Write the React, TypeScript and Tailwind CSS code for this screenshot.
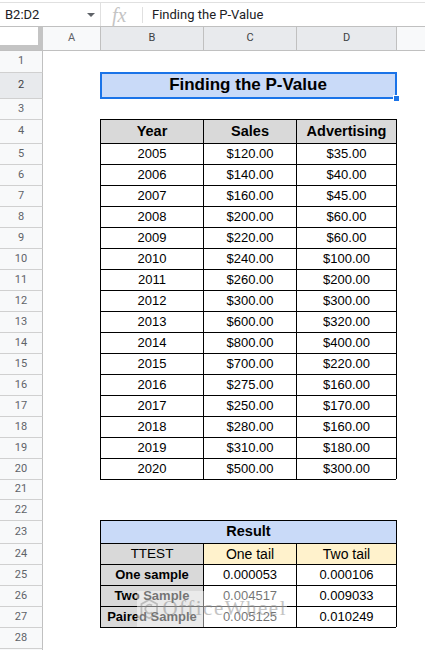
import React from 'react';

const years = [2005, 2006, 2007, 2008, 2009, 2010, 2011, 2012, 2013, 2014, 2015, 2016, 2017, 2018, 2019, 2020];
const sales = [120, 140, 160, 200, 220, 240, 260, 300, 600, 800, 700, 275, 250, 280, 310, 500];
const advertising = [35, 40, 45, 60, 60, 100, 200, 300, 320, 400, 220, 160, 170, 160, 180, 300];

const results = [
  { name: 'One sample', one: '0.000053', two: '0.000106' },
  { name: 'Two Sample', one: '0.004517', two: '0.009033' },
  { name: 'Paired Sample', one: '0.005125', two: '0.010249' },
];

const money = (v: number) => `$${v.toFixed(2)}`;

interface RowProps {
  n?: number;
  h: string;
  sel?: boolean;
  top?: boolean;
  children?: React.ReactNode;
}

// one sheet row: row number on the left, cells A..E after it
function SheetRow({ n, h, sel, top = true, children }: RowProps) {
  return (
    <div className={`flex ${h}`}>
      <div
        className={`w-[43px] shrink-0 flex items-center justify-center border-r border-r-[#c0c0c0] text-[11px] font-['Roboto',sans-serif] ${
          top ? 'border-t border-t-[#d0d0d0]' : ''
        } ${sel ? 'bg-[#e8eaed] text-[#3c4043]' : 'bg-[#f8f9fa] text-[#5f6368]'}`}
      >
        {n}
      </div>
      {children ?? <div className="flex-1" />}
    </div>
  );
}

// blank row with the bottom edge of a table drawn on top
function ClosingRow({ n, h }: { n: number; h: string }) {
  return (
    <SheetRow n={n} h={h}>
      <div className="w-[57px] shrink-0" />
      <div className="w-[296px] shrink-0 border-t border-black" />
      <div className="flex-1" />
    </SheetRow>
  );
}

const cell = 'shrink-0 flex items-center justify-center border-t border-l border-black text-black';

export default function App() {
  return (
    <div className="relative w-[425px] h-[650px] overflow-hidden bg-white font-['Liberation_Sans',Arial,sans-serif]">
      {/* formula bar */}
      <div className="pt-[2px]">
        <div className="h-[24px] border-t border-[#e0e0e0] flex items-center">
          <div className="w-[101px] h-full flex items-center justify-between pl-[5px] pr-[5px] border-r border-[#e0e0e0]">
            <span className="text-[13px] text-[#202124] font-['Roboto',sans-serif]">B2:D2</span>
            <svg width="8" height="4" viewBox="0 0 8 4">
              <path d="M0 0 L8 0 L4 4 Z" fill="#5f6368" />
            </svg>
          </div>
          <span className="ml-[11px] w-[20px] text-[20px] italic text-[#c4c4c4] font-['Liberation_Serif',serif] leading-none">
            fx
          </span>
          <div className="ml-[10px] w-px h-[16px] bg-[#e0e0e0]" />
          <span className="ml-[9px] text-[13px] text-[#202124] font-['Roboto',sans-serif]">Finding the P-Value</span>
        </div>
      </div>

      {/* column headers */}
      <div className="flex h-[25px] border-y border-[#c0c0c0] text-[11px] font-['Roboto',sans-serif]">
        <div className="w-[43px] shrink-0 bg-white border-r-[5px] border-b-[5px] border-[#c4c4c4]" />
        <div className="w-[57px] shrink-0 bg-[#f8f9fa] text-[#5f6368] flex items-center justify-center">A</div>
        <div className="w-[103px] shrink-0 bg-[#e8eaed] text-[#3c4043] border-l border-[#c0c0c0] flex items-center justify-center">B</div>
        <div className="w-[93px] shrink-0 bg-[#e8eaed] text-[#3c4043] border-l border-[#c0c0c0] flex items-center justify-center">C</div>
        <div className="w-[100px] shrink-0 bg-[#e8eaed] text-[#3c4043] border-l border-[#c0c0c0] flex items-center justify-center">D</div>
        <div className="flex-1 bg-[#f8f9fa] border-l border-[#c0c0c0]" />
      </div>

      <SheetRow n={1} h="h-[21px]" top={false} />

      {/* title, selected */}
      <SheetRow n={2} h="h-[26px]" sel>
        <div className="w-[57px] shrink-0" />
        <div className="relative w-[296px] shrink-0 bg-[#c9daf8] flex items-center justify-center text-[17px] font-bold text-black">
          Finding the P-Value
          <div className="absolute top-0 left-0 right-[-1px] bottom-[-1px] border-2 border-[#1a73e8] z-10" />
          <div className="absolute right-[-4px] bottom-[-4px] w-[7px] h-[7px] bg-[#1a73e8] border border-white z-20" />
        </div>
        <div className="flex-1" />
      </SheetRow>

      <SheetRow n={3} h="h-[21px]" />

      {/* data table */}
      <SheetRow n={4} h="h-[24px]">
        <div className="w-[57px] shrink-0" />
        <div className={`${cell} w-[103px] bg-[#d9d9d9] text-[14.5px] font-bold`}>Year</div>
        <div className={`${cell} w-[93px] bg-[#d9d9d9] text-[14.5px] font-bold`}>Sales</div>
        <div className={`${cell} w-[100px] bg-[#d9d9d9] text-[14.5px] font-bold`}>Advertising</div>
        <div className="flex-1 border-l border-black" />
      </SheetRow>

      {years.map((y, i) => (
        <SheetRow key={y} n={5 + i} h="h-[21px]">
          <div className="w-[57px] shrink-0" />
          <div className={`${cell} w-[103px] text-[13px]`}>{y}</div>
          <div className={`${cell} w-[93px] text-[13px]`}>{money(sales[i])}</div>
          <div className={`${cell} w-[100px] text-[13px]`}>{money(advertising[i])}</div>
          <div className="flex-1 border-l border-black" />
        </SheetRow>
      ))}

      <ClosingRow n={21} h="h-[20px]" />
      <SheetRow n={22} h="h-[21px]" />

      {/* result table */}
      <SheetRow n={23} h="h-[23px]">
        <div className="w-[57px] shrink-0" />
        <div className={`${cell} w-[296px] bg-[#c9daf8] text-[14.5px] font-bold`}>Result</div>
        <div className="flex-1 border-l border-black" />
      </SheetRow>

      <SheetRow n={24} h="h-[21px]">
        <div className="w-[57px] shrink-0" />
        <div className={`${cell} w-[103px] bg-[#d9d9d9] text-[13.5px]`}>TTEST</div>
        <div className={`${cell} w-[93px] bg-[#fff2cc] text-[14px]`}>One tail</div>
        <div className={`${cell} w-[100px] bg-[#fff2cc] text-[14px]`}>Two tail</div>
        <div className="flex-1 border-l border-black" />
      </SheetRow>

      {results.map((r, i) => (
        <SheetRow key={r.name} n={25 + i} h="h-[21px]">
          <div className="w-[57px] shrink-0" />
          <div className={`${cell} w-[103px] bg-[#d9d9d9] text-[13px] font-bold whitespace-nowrap`}>{r.name}</div>
          <div className={`${cell} w-[93px] text-[13px]`}>{r.one}</div>
          <div className={`${cell} w-[100px] text-[13px]`}>{r.two}</div>
          <div className="flex-1 border-l border-black" />
        </SheetRow>
      ))}

      <ClosingRow n={28} h="h-[21px]" />
      {/* next row only peeks in at the bottom edge */}
      <SheetRow h="h-[21px]" />

      {/* watermark */}
      <div className="absolute left-[137px] top-[591px] w-[150px] h-[36px] bg-white/45 flex items-center gap-[4px] pl-[3px] pointer-events-none">
        <svg width="26" height="30" viewBox="0 0 26 30" className="opacity-40">
          <path d="M13 2 L24 8 L24 22 L13 28 L2 22 L2 8 Z" fill="none" stroke="#7a7a7a" strokeWidth="2.5" />
          <path d="M17 10 A6 6 0 1 0 17 20" fill="none" stroke="#7a7a7a" strokeWidth="2.5" />
        </svg>
        <span className="text-[21px] tracking-[1.5px] text-[#8a8a8a] opacity-50 font-['Liberation_Serif',serif]">
          OfficeWheel
        </span>
      </div>
    </div>
  );
}
